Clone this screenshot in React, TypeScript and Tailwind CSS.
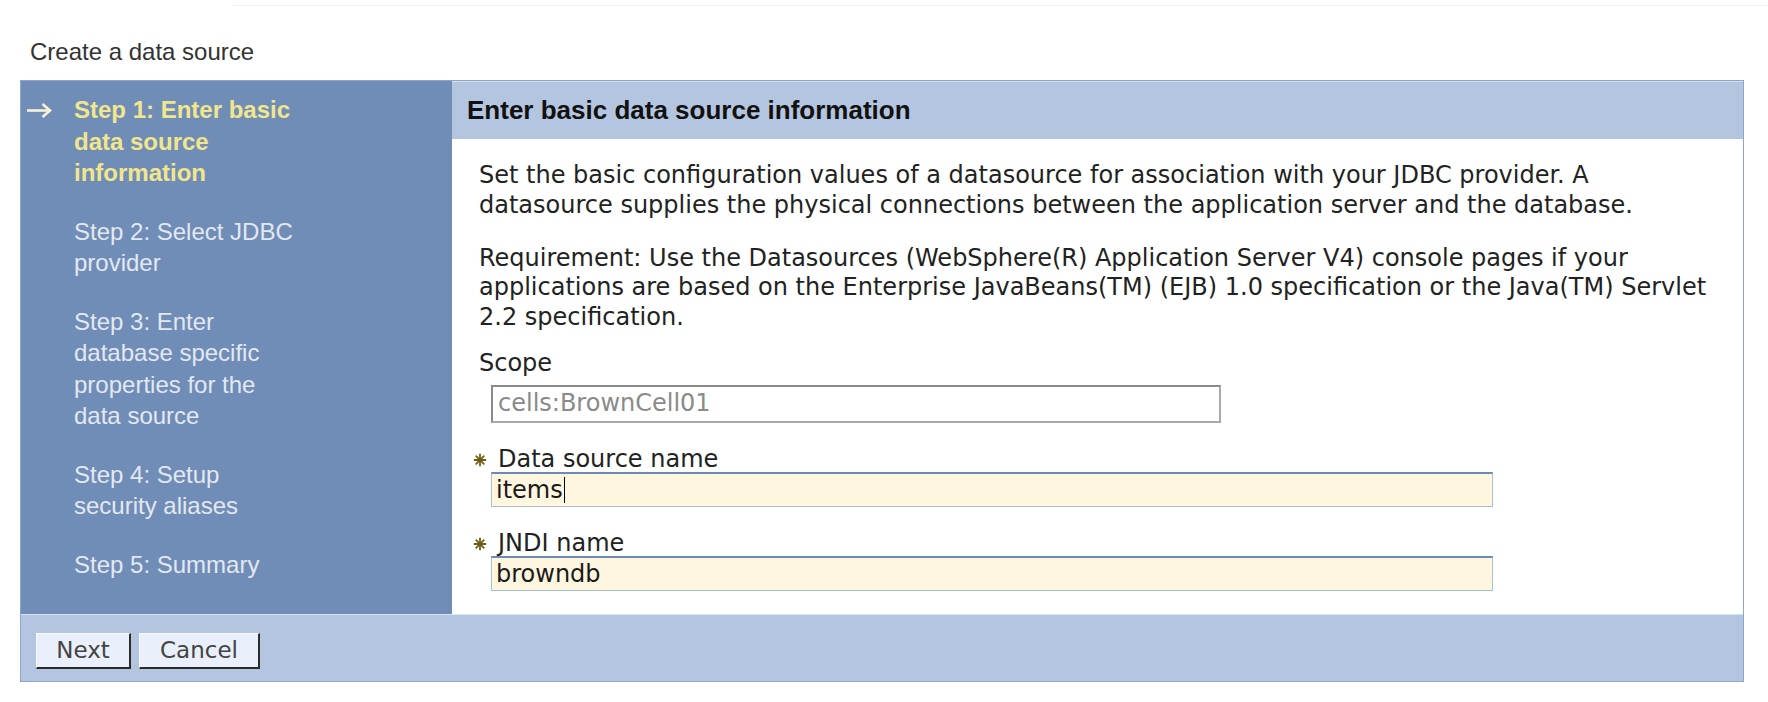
import React from "react";

const steps = [
    { lines: ["Step 1: Enter basic", "data source", "information"], current: true },
    { lines: ["Step 2: Select JDBC", "provider"] },
    { lines: ["Step 3: Enter", "database specific", "properties for the", "data source"] },
    { lines: ["Step 4: Setup", "security aliases"] },
    { lines: ["Step 5: Summary"] },
];

function Arrow() {
    return (
        <svg width="27" height="16" viewBox="0 0 27 16" fill="none">
            <path d="M1 8.5H24" stroke="#f6f2d8" strokeWidth="2.6" />
            <path d="M16.5 2L24 8.5L16.5 15" stroke="#f6f2d8" strokeWidth="2.6" />
        </svg>
    );
}

function RequiredStar() {
    return (
        <svg width="14" height="14" viewBox="0 0 14 14" className="shrink-0">
            <g stroke="#6e5c12" strokeWidth="1.8" strokeLinecap="round">
                <path d="M7 1.5V12.5" />
                <path d="M1.5 7H12.5" />
                <path d="M3.2 3.2L10.8 10.8" />
                <path d="M10.8 3.2L3.2 10.8" />
            </g>
        </svg>
    );
}

function StepList() {
    return (
        <div className="w-[431px] shrink-0 bg-[#708db8] pt-[13px] px-[3px] font-['Liberation_Sans',Arial,sans-serif] text-[24px] leading-[31.5px]">
            {steps.map((s, i) => (
                <div key={i} className={i > 0 ? "flex mt-[27px]" : "flex"}>
                    <div className="w-[50px] h-[31.5px] flex items-center pl-[2px]">
                        {s.current && <Arrow />}
                    </div>
                    <div className={s.current ? "font-bold text-[#f2e68c]" : "text-[#e3e8ef]"}>
                        {s.lines.map((l, j) => (
                            <div key={j} className="whitespace-nowrap">{l}</div>
                        ))}
                    </div>
                </div>
            ))}
        </div>
    );
}

function Field({ label, value, top }: { label: string; value: string; top: string }) {
    return (
        <>
            <div className={"flex items-center ml-[-6px] h-[29.3px] " + top}>
                <RequiredStar />
                <span className="ml-[11px]">{label}</span>
            </div>
            <div className="mt-[-2px] ml-[12px] w-[1002px] h-[35px] bg-[#fff6df] border border-[#a6bddb] border-t-2 border-t-[#6b8ab6] flex items-center px-[4px] text-[#1a1a1a]">
                {value}
                {value === "items" && <span className="inline-block w-px h-[26px] bg-black ml-px" />}
            </div>
        </>
    );
}

export default function App() {
    return (
        <div className="w-full h-[702px] bg-white overflow-hidden">
            <div className="mt-[5px] ml-[233px] h-px bg-[#f1f1f1]" />
            <div className="mt-[32px] px-[30px] h-[28px] leading-[28px] text-[24px] text-[#333] font-['Liberation_Sans',Arial,sans-serif]">
                Create a data source
            </div>
            <div className="mt-[14px] ml-[20px] w-[1724px] border border-[#8da6cd] flex flex-col">
                <div className="flex">
                    <StepList />
                    <div className="flex-1 flex flex-col bg-white">
                        <div className="h-[58px] bg-[#b4c5df] border-t border-[#d6dfee] px-[15px] flex items-center font-['Liberation_Sans',Arial,sans-serif] font-bold text-[26px] text-[#111]">
                            Enter basic data source information
                        </div>
                        <div className="pt-[22.4px] pb-[23px] px-[27px] font-['DejaVu_Sans',sans-serif] text-[24px] leading-[29.3px] text-[#222]">
                            <p className="whitespace-nowrap">
                                Set the basic configuration values of a datasource for association with your JDBC provider. A
                                <br />
                                datasource supplies the physical connections between the application server and the database.
                            </p>
                            <p className="mt-[24px] whitespace-nowrap">
                                Requirement: Use the Datasources (WebSphere(R) Application Server V4) console pages if your
                                <br />
                                applications are based on the Enterprise JavaBeans(TM) (EJB) 1.0 specification or the Java(TM) Servlet
                                <br />
                                2.2 specification.
                            </p>
                            <div className="mt-[17px]">Scope</div>
                            <div className="mt-[6.5px] ml-[12px] w-[730px] h-[38px] border-2 border-[#8a8a8a] border-b-[#a9a9a9] border-r-[#a9a9a9] flex items-center px-[5px] text-[#8a8a8a]">
                                cells:BrownCell01
                            </div>
                            <Field label="Data source name" value="items" top="mt-[22.5px]" />
                            <Field label="JNDI name" value="browndb" top="mt-[21.4px]" />
                        </div>
                    </div>
                </div>
                <div className="bg-[#b4c5df] border-t border-[#dbe3f0] pt-[18px] pb-[12px] px-[15px] flex gap-[8px] font-['DejaVu_Sans',sans-serif] text-[23px] text-[#444]">
                    <button className="w-[95px] h-[36px] bg-[#eaf0fb] border border-[#f7f9fd] border-r-2 border-b-2 border-r-[#2b2b2b] border-b-[#2b2b2b] flex items-center justify-center">
                        Next
                    </button>
                    <button className="w-[121px] h-[36px] bg-[#eaf0fb] border border-[#f7f9fd] border-r-2 border-b-2 border-r-[#2b2b2b] border-b-[#2b2b2b] flex items-center justify-center">
                        Cancel
                    </button>
                </div>
            </div>
        </div>
    );
}
